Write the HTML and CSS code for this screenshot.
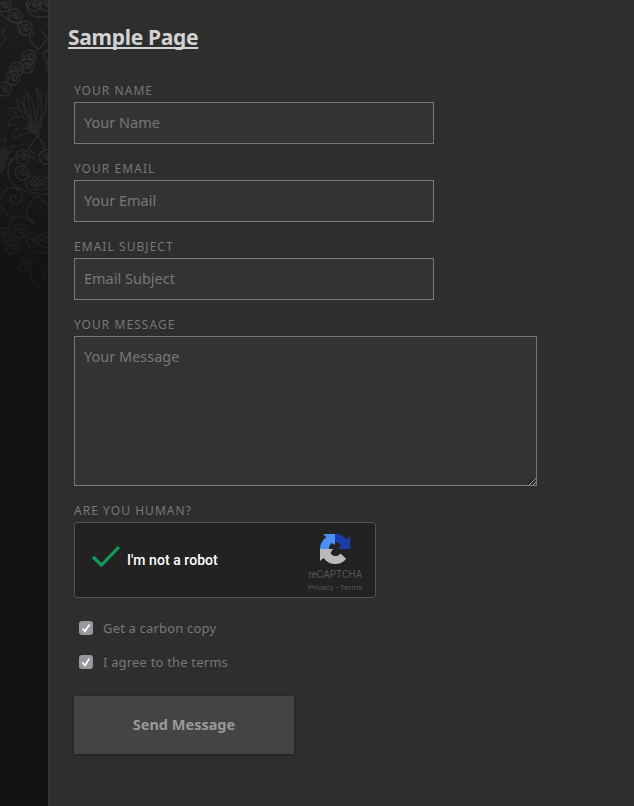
FILE: index.html
```html
<!DOCTYPE html>
<html lang="en">
<head>
<meta charset="utf-8">
<title>Sample Page</title>
<link rel="stylesheet" href="styles.css">
</head>
<body>
<div class="page">
  <aside class="rail">
    <svg class="damask" width="48" height="360" viewBox="0 0 48 360" aria-hidden="true">
      <defs>
        <linearGradient id="shade" x1="0" y1="0" x2="0" y2="1"><stop offset="0" stop-color="#131313" stop-opacity="0"/><stop offset=".45" stop-color="#131313" stop-opacity=".25"/><stop offset=".95" stop-color="#111"/></linearGradient>
        <g id="curl"><circle r="7"/><path d="M-5 3C-4-5 4-5 4 0C4 3 0 4-1 1"/><circle r="1.200"/></g>
      </defs>
      <g fill="none" stroke="#303030" stroke-width="1.400">
        <use href="#curl" x="4" y="5"/><use href="#curl" x="15" y="16"/><use href="#curl" x="25" y="28"/>
        <use href="#curl" x="34" y="4"/><use href="#curl" x="46" y="4"/>
        <path d="M26 2C26 12 31 17 40 17H48M0 13C9 23 17 23 22 23M18 24C18 36 28 38 32 30M34 32C29 36 29 40 31 42C34 45 36 47 38 50C40 47 44 44 46 41C48 37 45 34 40 31"/>
        <use href="#curl" x="29" y="57"/><use href="#curl" x="27" y="66"/><use href="#curl" x="17" y="69"/><use href="#curl" x="13" y="78"/><use href="#curl" x="4" y="89"/>
        <path d="M48 50C41 52 43 60 48 61M48 62C44 67 47 70 48 71"/>
        <path stroke-width="1" d="M37 134C34 118 20 105 7 108C14 111 17 113 19 118C13 115 10 120 8 126C15 123 17 125 18 130C12 129 12 135 14 138C22 135 27 131 37 134ZM25 120C16 106 19 102 15 98C24 102 28 112 32 122C30 104 28 96 25 90C33 95 34 109 36 124C38 107 41 98 35 87C44 90 41 113 40 123C44 114 48 106 46 94M33 124C24 114 22 106 25 95"/>
        <path d="M38 134C36 141 30 144 29 148C30 152 33 153 35 154M38 134C39 140 43 142 44 146C45 151 42 153 39 154"/>
        <path stroke-width="1" d="M0 142L6 138L4 150L15 145L6 157L14 160L2 167M0 32L5 28L2 36L6 38L0 46"/>
        <use href="#curl" x="23" y="157"/><use href="#curl" x="46" y="157"/><use href="#curl" x="22" y="173"/><path d="M8 173C7 151 31 152 38 162M8 173C10 188 26 194 48 194"/>
        <use href="#curl" x="32" y="183"/><use href="#curl" x="42" y="183"/><path d="M1 200C2 185 18 184 22 195C23 204 12 207 10 199C11 194 16 195 16 199M1 203C2 214 12 220 20 216M38 196C29 203 24 210 28 217L34 223M38 196L48 206"/>
        <path d="M9 231C8 213 27 213 34 225M9 231C11 240 21 243 25 233"/><use href="#curl" x="20" y="231"/><use href="#curl" x="33" y="240"/><use href="#curl" x="45" y="240"/><use href="#curl" x="3" y="235"/><use href="#curl" x="12" y="247"/><use href="#curl" x="25" y="265"/>
        <path d="M27 237C26 250 35 254 48 253M31 270C29 280 34 282 38 286C44 282 47 278 44 270"/>
      </g>
      <path d="M28 120L34 124L35 115L38 124L43 116L42 126L38 136C30 130 25 129 20 130L28 126ZM0 148L9 151L4 170L0 174Z" fill="#2a2a2a"/>
      <rect width="48" height="360" fill="url(#shade)"/>
    </svg>
  </aside>
  <main class="content">
    <h1 class="title"><span class="title-text">Sample Page</span></h1>
    <form class="form">
      <label class="label" for="name">YOUR NAME</label>
      <input class="field" id="name" type="text" placeholder="Your Name">
      <label class="label" for="email">YOUR EMAIL</label>
      <input class="field" id="email" type="text" placeholder="Your Email">
      <label class="label" for="subject">EMAIL SUBJECT</label>
      <input class="field" id="subject" type="text" placeholder="Email Subject">
      <label class="label" for="message">YOUR MESSAGE</label>
      <div class="message-wrap">
        <textarea class="field message" id="message" placeholder="Your Message"></textarea>
        <svg class="grip" width="8" height="8" viewBox="0 0 8 8" aria-hidden="true"><path d="M1 7L7 1M5 7L7 5" stroke="#111" stroke-width="1.500"/><path d="M1 8L8 1M5 8L8 5" stroke="#ccc" stroke-width=".8"/></svg>
      </div>
      <div class="label">ARE YOU HUMAN?</div>
      <div class="captcha">
        <svg class="tick" width="30" height="24" viewBox="0 0 30 24" aria-hidden="true"><path d="M2 12L10.500 20L28 2" fill="none" stroke="#0f9d58" stroke-width="3.200"/></svg>
        <span class="robot">I'm not a robot</span>
        <div class="brand">
          <svg class="logo" width="32" height="32" viewBox="0 0 32 32" aria-hidden="true">
            <path d="M16 1H4L7.300 4.300C3 7.500 1 11.500 1 16H10C10 13.500 11 11.500 12.500 10L16 12Z" fill="#4a90f5"/>
            <path d="M16 1C21 1 25 3 27.700 6.500L31 3V16H19L22 12C20.500 10 18.500 9 16 9Z" fill="#1c3aa9"/>
            <path d="M1 16V28L4.500 25C7.500 29 11.500 31 16 31C21 31 24.500 29 27.200 25.700L21.500 20.500C18 24.500 13.500 23.500 11.500 20L14 16Z" fill="#bababa"/>
          </svg>
          <div class="brand-name">reCAPTCHA</div>
          <div class="brand-links">Privacy - Terms</div>
        </div>
      </div>
      <label class="check"><input type="checkbox" checked><svg class="box" width="14" height="14" viewBox="0 0 14 14" aria-hidden="true"><rect width="14" height="14" rx="3" fill="#98979d"/><path d="M3.500 7.500L6 10.300L10.500 3.500" fill="none" stroke="#fff" stroke-width="1.700"/></svg><span class="check-copy">Get a carbon copy</span></label>
      <label class="check"><input type="checkbox" checked><svg class="box" width="14" height="14" viewBox="0 0 14 14" aria-hidden="true"><rect width="14" height="14" rx="3" fill="#98979d"/><path d="M3.500 7.500L6 10.300L10.500 3.500" fill="none" stroke="#fff" stroke-width="1.700"/></svg><span class="check-terms">I agree to the terms</span></label>
      <button class="send" type="button">Send Message</button>
    </form>
  </main>
</div>
</body>
</html>
```
FILE: styles.css
```css
* { box-sizing: border-box; }
body { margin: 0; background: #2e2e2e; color: #777; font-family: "Noto Sans", sans-serif; }
.page { display: flex; height: 806px; overflow: hidden; }
.rail { width: 48px; flex: none; background: linear-gradient(#1c1c1c, #1a1a1a 200px, #111 350px); }
.damask { display: block; }
.content { flex: 1; padding: 22px 20px 0 19px; border-left: 1px solid #363636; }
.title { margin: 0; height: 30px; font-size: 21px; line-height: 30px; font-weight: 700; letter-spacing: -.3px; color: #d2d2d2; text-decoration: underline; text-decoration-thickness: 2px; text-underline-offset: 2px; text-decoration-skip-ink: none; }
.form { display: flex; flex-direction: column; align-items: flex-start; padding: 29px 0 0 6px; }
.label { height: 21px; font-size: 12px; line-height: 19px; letter-spacing: 1.05px; white-space: nowrap; }
.field { display: block; width: 360px; height: 42px; margin: 0 0 15px; padding: 0 9px 2px; border: 1px solid #777; border-radius: 0; background: #333; color: #777; font: 14.5px/20px "Noto Sans", sans-serif; letter-spacing: 0; outline: 0; }
.field::placeholder { color: #777; opacity: 1; }
.message-wrap { position: relative; }
.message { width: 463px; height: 150px; padding-top: 9px; resize: none; }
.grip { position: absolute; right: 1px; bottom: 16px; }
.captcha { display: flex; width: 302px; height: 76px; border: 1px solid #525252; border-radius: 3px; background: #222; font-family: Roboto, sans-serif; }
.tick { margin: 22px 6px 0 16px; flex: none; }
.robot { width: 170px; padding-top: 27px; font-size: 14px; line-height: 20px; font-weight: 500; letter-spacing: .06px; color: #fff; white-space: nowrap; }
.brand { display: flex; flex-direction: column; align-items: center; width: 80px; padding-top: 10px; margin-left: -1px; color: #555; white-space: nowrap; }
.brand-name { font-size: 10px; line-height: 14px; margin-top: 3px; }
.brand-links { font-size: 8px; line-height: 10px; margin-top: 1px; }
.check { display: flex; align-items: center; height: 20px; margin: 20px 0 -6px 5px; font-size: 13px; line-height: 20px; letter-spacing: .18px; white-space: nowrap; }
.check input { position: absolute; opacity: 0; pointer-events: none; }
.box { margin-right: 10px; }
.send { width: 220px; height: 58px; margin: 30px 0 0; padding: 0 0 2px; border: 0; background: #444; color: #999; font: 700 14.5px/20px "Noto Sans", sans-serif; box-shadow: 0 1px 3px #1d1d1d; }
```
